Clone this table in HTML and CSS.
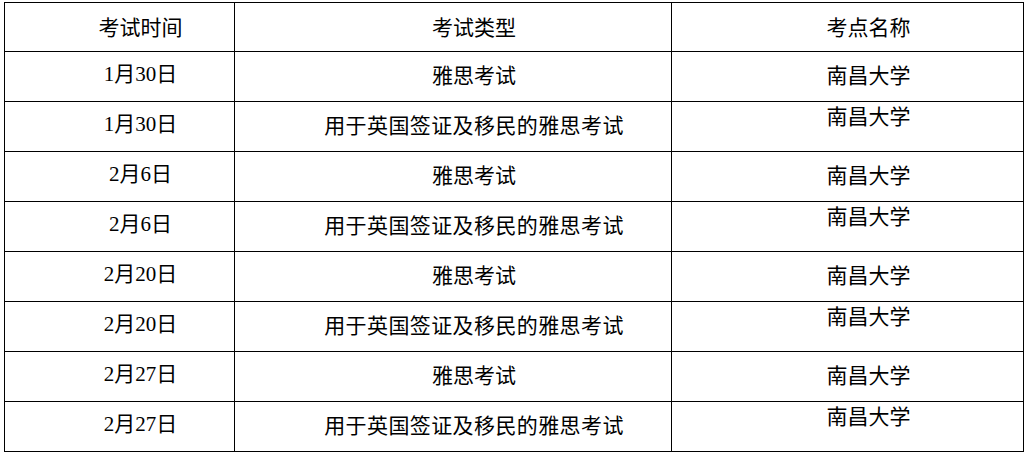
FILE: index.html
```html
<!DOCTYPE html>
<html lang="zh-CN">
<head>
<meta charset="utf-8">
<link rel="stylesheet" href="styles.css">
</head>
<body>
<table class="schedule">
  <colgroup>
    <col class="c-date">
    <col class="c-type">
    <col class="c-site">
  </colgroup>
  <tr class="head"><td>考试时间</td><td>考试类型</td><td>考点名称</td></tr>
  <tr><td class="num">1月30日</td><td>雅思考试</td><td>南昌大学</td></tr>
  <tr class="alt"><td class="num">1月30日</td><td class="long">用于英国签证及移民的雅思考试</td><td class="top">南昌大学</td></tr>
  <tr><td class="num">2月6日</td><td>雅思考试</td><td>南昌大学</td></tr>
  <tr class="alt"><td class="num">2月6日</td><td class="long">用于英国签证及移民的雅思考试</td><td class="top">南昌大学</td></tr>
  <tr><td class="num">2月20日</td><td>雅思考试</td><td>南昌大学</td></tr>
  <tr class="alt"><td class="num">2月20日</td><td class="long">用于英国签证及移民的雅思考试</td><td class="top">南昌大学</td></tr>
  <tr><td class="num">2月27日</td><td>雅思考试</td><td>南昌大学</td></tr>
  <tr class="alt"><td class="num">2月27日</td><td class="long">用于英国签证及移民的雅思考试</td><td class="top">南昌大学</td></tr>
</table>
</body>
</html>
```
FILE: styles.css
```css
html, body {
  margin: 0;
  padding: 0;
  background: #fff;
}
.schedule {
  margin: 2px 0 0 4px;
  border-collapse: collapse;
  table-layout: fixed;
  width: 1019px;
  font-family: "Noto Sans CJK SC", "Liberation Serif", serif;
  font-size: 21px;
  color: #000;
}
.c-date { width: 230px; }
.c-type { width: 437px; }
.c-site { width: 352px; }
.schedule td {
  border: 1px solid #000;
  height: 50px;
  padding: 0 0 5px 42px;
  text-align: center;
  vertical-align: middle;
  line-height: 24px;
  box-sizing: border-box;
}
.schedule .head td {
  height: 49px;
  padding-bottom: 2px;
}
.schedule td.num {
  font-family: "Liberation Serif", "Noto Sans CJK SC", serif;
}
.schedule td.long { letter-spacing: 0.4px; }
.schedule td.top {
  vertical-align: top;
  padding-top: 1px;
  padding-bottom: 0;
}
```
